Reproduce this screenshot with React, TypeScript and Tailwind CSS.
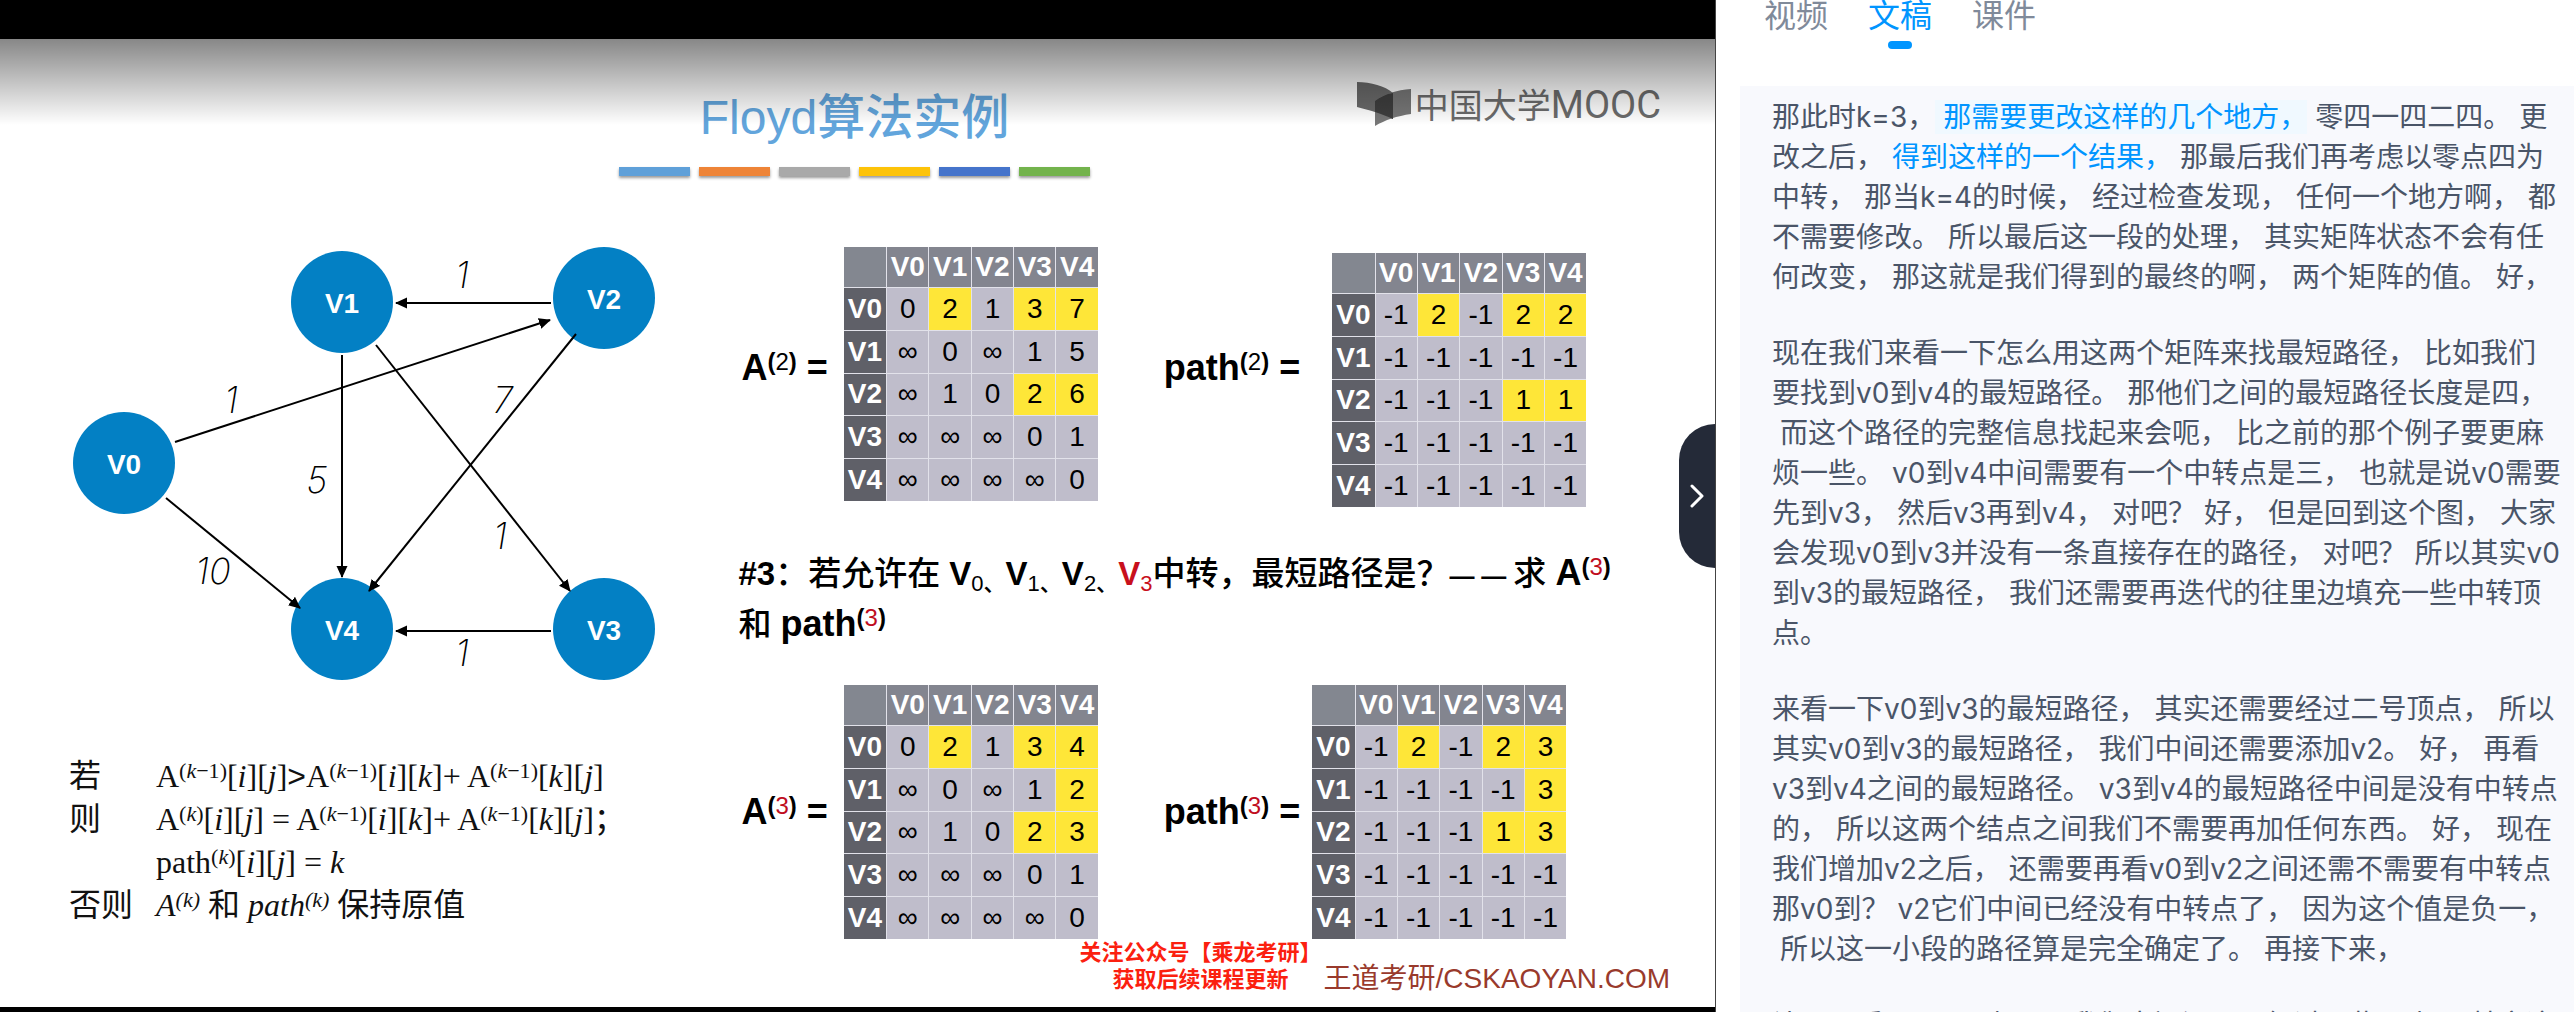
import React from "react";

const NODES = ["V0", "V1", "V2", "V3", "V4"];

type MatrixData = { rows: string[]; marked: string[] };

const A2: MatrixData = {
  rows: ["0 2 1 3 7", "∞ 0 ∞ 1 5", "∞ 1 0 2 6", "∞ ∞ ∞ 0 1", "∞ ∞ ∞ ∞ 0"],
  marked: ["01", "03", "04", "23", "24"],
};
const P2: MatrixData = {
  rows: ["-1 2 -1 2 2", "-1 -1 -1 -1 -1", "-1 -1 -1 1 1", "-1 -1 -1 -1 -1", "-1 -1 -1 -1 -1"],
  marked: ["01", "03", "04", "23", "24"],
};
const A3: MatrixData = {
  rows: ["0 2 1 3 4", "∞ 0 ∞ 1 2", "∞ 1 0 2 3", "∞ ∞ ∞ 0 1", "∞ ∞ ∞ ∞ 0"],
  marked: ["01", "03", "04", "14", "23", "24"],
};
const P3: MatrixData = {
  rows: ["-1 2 -1 2 3", "-1 -1 -1 -1 3", "-1 -1 -1 1 3", "-1 -1 -1 -1 -1", "-1 -1 -1 -1 -1"],
  marked: ["01", "03", "04", "14", "23", "24"],
};

function Matrix({ data, label }: { data: MatrixData; label: string }) {
  return (
    <table
      aria-label={label}
      className="h-[254px] w-[254px] shrink-0 table-fixed border-separate border-spacing-0 text-center font-['Liberation_Sans',sans-serif] text-[28px] leading-[40px]"
    >
      <thead>
        <tr>
          <td className="bg-[#838790] p-0" />
          {NODES.map((n) => (
            <th key={n} scope="col" className="border-l border-[#e2e2ea] bg-[#83858f] p-0 font-bold text-white">
              {n}
            </th>
          ))}
        </tr>
      </thead>
      <tbody>
        {data.rows.map((row, r) => (
          <tr key={NODES[r]}>
            <th scope="row" className="border-t border-[#e2e2ea] bg-[#5f6068] p-0 font-bold text-white">
              {NODES[r]}
            </th>
            {row.split(" ").map((v, c) => (
              <td
                key={c}
                className={
                  data.marked.includes(`${r}${c}`)
                    ? "border-t border-l border-[#e2e2ea] bg-[#fee638] p-0 text-black"
                    : "border-t border-l border-[#e2e2ea] bg-[#bfbdcb] p-0 text-black"
                }
              >
                {v}
              </td>
            ))}
          </tr>
        ))}
      </tbody>
    </table>
  );
}

function Sup({ n, red }: { n: string; red?: boolean }) {
  return (
    <sup className="top-[-10px] text-[24px]">
      (<span className={red ? "font-normal text-[#c00d1e]" : "font-normal"}>{n}</span>)
    </sup>
  );
}

function Label({ name, n, red }: { name: string; n: string; red?: boolean }) {
  return (
    <span className="whitespace-nowrap font-['Liberation_Sans',sans-serif] text-[36px] leading-[40px] font-bold">
      {name}
      <Sup n={n} red={red} /> =
    </span>
  );
}

function Graph() {
  const nodes: [string, number, number][] = [
    ["V1", 342, 302],
    ["V2", 604, 298],
    ["V0", 124, 463],
    ["V4", 342, 629],
    ["V3", 604, 629],
  ];
  const edges = [
    [551, 303, 396, 303],
    [175, 442, 550, 320],
    [342, 355, 342, 577],
    [376, 345, 570, 591],
    [576, 334, 369, 591],
    [166, 498, 300, 608],
    [551, 631, 396, 631],
  ];
  const weights: [string, number, number][] = [
    ["1", 462, 288],
    ["1", 231, 413],
    ["7", 503, 413],
    ["5", 317, 493],
    ["1", 500, 549],
    ["10", 213, 584],
    ["1", 462, 666],
  ];
  return (
    <svg viewBox="60 235 620 460" className="ml-[60px] h-[460px] w-[620px]" role="img" aria-label="有向图">
      <defs>
        <marker id="head" viewBox="0 0 12 12" refX="11" refY="6" markerWidth="12" markerHeight="12" markerUnits="userSpaceOnUse" orient="auto">
          <path d="M0 0.5 L12 6 L0 11.5 Z" fill="#000" />
        </marker>
      </defs>
      {nodes.map(([n, x, y]) => (
        <g key={n}>
          <circle cx={x} cy={y} r="51" fill="#0380c4" />
          <text x={x} y={y + 11} textAnchor="middle" className="fill-white font-['Liberation_Sans',sans-serif] text-[28px] font-bold">
            {n}
          </text>
        </g>
      ))}
      {edges.map(([x1, y1, x2, y2], i) => (
        <line key={i} x1={x1} y1={y1} x2={x2} y2={y2} stroke="#000" strokeWidth="2" markerEnd="url(#head)" />
      ))}
      {weights.map(([w, x, y], i) => (
        <text key={i} x={x} y={y} textAnchor="middle" className="fill-black font-[Inter,sans-serif] text-[36px] font-extralight italic">
          {w}
        </text>
      ))}
    </svg>
  );
}

function K({ minus }: { minus?: boolean }) {
  return (
    <sup className="top-[-9px] text-[22px]">
      (<i>k</i>
      {minus ? "−1" : ""})
    </sup>
  );
}

function Rules() {
  return (
    <div className="mt-[60px] ml-[69px] grid grid-cols-[87px_1fr] font-['Liberation_Serif','Noto_Sans_CJK_SC',serif] text-[32px] leading-[43px] whitespace-nowrap text-[#111]">
      <span>若</span>
      <span>
        A<K minus />[<i>i</i>][<i>j</i>]<span className="font-['Liberation_Sans',sans-serif]">&gt;</span>A<K minus />[<i>i</i>][<i>k</i>]+ A
        <K minus />[<i>k</i>][<i>j</i>]
      </span>
      <span>则</span>
      <span>
        A<K />[<i>i</i>][<i>j</i>] = A<K minus />[<i>i</i>][<i>k</i>]+ A<K minus />[<i>k</i>][<i>j</i>]；
      </span>
      <span />
      <span>
        path<K />[<i>i</i>][<i>j</i>] = <i>k</i>
      </span>
      <span>否则</span>
      <span>
        <i>A<K /></i> 和 <i>path<K /></i> 保持原值
      </span>
    </div>
  );
}

function Logo() {
  return (
    <div className="flex items-center gap-1 text-[#6c6c6c]">
      <svg viewBox="0 0 54 44" className="h-11 w-[54px]" aria-hidden="true">
        <path d="M0 0 C14 0 28 4 36 11 V37 C26 32 12 28 0 25 Z" fill="#6a6a6a" />
        <path d="M18 19 C26 12 40 8 54 7 V32 C40 34 28 38 18 44 Z" fill="#777" />
        <path d="M18 19 C23 15 29 12 36 11 V37 C30 34 24 32 18 30 Z" fill="#3e3e3e" />
      </svg>
      <span className="font-['Noto_Sans_CJK_SC',sans-serif] text-[34px] leading-[44px] whitespace-nowrap">
        中国大学<span className="font-[Roboto,sans-serif] text-[38px] leading-[40px]">MOOC</span>
      </span>
    </div>
  );
}

function Question() {
  return (
    <p className="mt-[42px] pl-px font-['Liberation_Sans','Noto_Sans_CJK_SC',sans-serif] text-[33px] leading-[48px] font-medium whitespace-nowrap">
      <b>#3</b>：若允许在 <b>V</b>
      <sub className="text-[22px]">0、</sub>
      <b>V</b>
      <sub className="text-[22px]">1、</sub>
      <b>V</b>
      <sub className="text-[22px]">2、</sub>
      <span className="text-[#c8101c]">
        <b>V</b>
        <sub className="text-[22px]">3</sub>
      </span>
      中转，最短路径是？<b className="text-[25px]">— — </b>求{" "}
      <b className="text-[36px]">
        A<Sup n="3" red />
      </b>
      <br />和{" "}
      <b className="text-[36px]">
        path
        <Sup n="3" red />
      </b>
    </p>
  );
}

function Slide() {
  return (
    <section className="relative flex min-w-0 flex-col border-r border-[#444] bg-white text-black">
      <div className="h-[39px] shrink-0 bg-black" />
      <div className="relative flex-1">
        <header className="grid grid-cols-[1fr_auto_1fr] items-start pt-[51px] pr-[6px]">
          <h1 className="col-start-2 text-center font-['Liberation_Sans','Noto_Sans_CJK_SC',sans-serif] text-[48px] leading-[56px] font-medium text-[#62a5dc]">
            Floyd算法实例
          </h1>
          <div className="-mt-2 flex justify-end pr-[48px]">
            <Logo />
          </div>
        </header>
        <div className="mt-[21px] flex justify-center gap-[9px] pr-[6px]">
          <i className="h-[9px] w-[71px] bg-[#5fa0d9] shadow-[0_2px_3px_#999]" />
          <i className="h-[9px] w-[71px] bg-[#ee8437] shadow-[0_2px_3px_#999]" />
          <i className="h-[9px] w-[71px] bg-[#a9a9a9] shadow-[0_2px_3px_#999]" />
          <i className="h-[9px] w-[71px] bg-[#fdc309] shadow-[0_2px_3px_#999]" />
          <i className="h-[9px] w-[71px] bg-[#4574cb] shadow-[0_2px_3px_#999]" />
          <i className="h-[9px] w-[71px] bg-[#73b34c] shadow-[0_2px_3px_#999]" />
        </div>
        <div className="grid grid-cols-[43%_1fr]">
          <div className="pt-[59px]">
            <Graph />
            <Rules />
          </div>
          <div className="pt-[71px]">
            <div className="flex items-start gap-[66px] pl-1">
              <div className="flex items-center gap-4">
                <div className="pb-3">
                  <Label name="A" n="2" />
                </div>
                <Matrix data={A2} label="A(2)" />
              </div>
              <div className="flex items-center gap-8 pt-[6px]">
                <div className="pb-6">
                  <Label name="path" n="2" />
                </div>
                <Matrix data={P2} label="path(2)" />
              </div>
            </div>
            <Question />
            <div className="mt-[36px] flex items-start gap-[66px] pl-1">
              <div className="flex items-center gap-4">
                <Label name="A" n="3" red />
                <Matrix data={A3} label="A(3)" />
              </div>
              <div className="flex items-center gap-3">
                <Label name="path" n="3" red />
                <Matrix data={P3} label="path(3)" />
              </div>
            </div>
            <footer className="flex items-end justify-end gap-[2px] pr-[45px] font-['Liberation_Sans','Noto_Sans_CJK_SC',sans-serif] whitespace-nowrap">
              <p className="text-center text-[22px] leading-[27px] font-bold text-[#fb200f]">
                关注公众号【乘龙考研】
                <br />
                获取后续课程更新
              </p>
              <p className="text-[28px] leading-[28px] text-[#993a2c]">王道考研/CSKAOYAN.COM</p>
            </footer>
          </div>
        </div>
        <div className="pointer-events-none absolute inset-x-0 top-0 h-[86px] bg-linear-to-b from-black/47 to-black/0" />
      </div>
      <div className="h-[5px] shrink-0 bg-black" />
      <button
        type="button"
        aria-label="收起"
        className="absolute top-[49%] right-0 flex h-36 w-9 -translate-y-1/2 items-center justify-center rounded-l-[36px] bg-[#242a38]"
      >
        <svg
          viewBox="0 0 14 24"
          className="h-6 w-[14px]"
          fill="none"
          stroke="#fff"
          strokeWidth="3"
          strokeLinecap="round"
          strokeLinejoin="round"
          aria-hidden="true"
        >
          <path d="M2 2 L12 12 L2 22" />
        </svg>
      </button>
    </section>
  );
}

type Segment = { text: string; tone?: "current" | "spoken" };

const PARAGRAPHS: Segment[][] = [
  [
    { text: "那此时k=3，" },
    { text: "那需要更改这样的几个地方，", tone: "current" },
    { text: "零四一四二四。" },
    { text: "更改之后，" },
    { text: "得到这样的一个结果，", tone: "spoken" },
    { text: "那最后我们再考虑以零点四为中转，" },
    { text: "那当k=4的时候，" },
    { text: "经过检查发现，" },
    { text: "任何一个地方啊，" },
    { text: "都不需要修改。" },
    { text: "所以最后这一段的处理，" },
    { text: "其实矩阵状态不会有任何改变，" },
    { text: "那这就是我们得到的最终的啊，" },
    { text: "两个矩阵的值。" },
    { text: "好，" },
  ],
  [
    { text: "现在我们来看一下怎么用这两个矩阵来找最短路径，" },
    { text: "比如我们要找到v0到v4的最短路径。" },
    { text: "那他们之间的最短路径长度是四，" },
    { text: "而这个路径的完整信息找起来会呃，" },
    { text: "比之前的那个例子要更麻烦一些。" },
    { text: "v0到v4中间需要有一个中转点是三，" },
    { text: "也就是说v0需要先到v3，" },
    { text: "然后v3再到v4，" },
    { text: "对吧？" },
    { text: "好，" },
    { text: "但是回到这个图，" },
    { text: "大家会发现v0到v3并没有一条直接存在的路径，" },
    { text: "对吧？" },
    { text: "所以其实v0到v3的最短路径，" },
    { text: "我们还需要再迭代的往里边填充一些中转顶点。" },
  ],
  [
    { text: "来看一下v0到v3的最短路径，" },
    { text: "其实还需要经过二号顶点，" },
    { text: "所以其实v0到v3的最短路径，" },
    { text: "我们中间还需要添加v2。" },
    { text: "好，" },
    { text: "再看v3到v4之间的最短路径。" },
    { text: "v3到v4的最短路径中间是没有中转点的，" },
    { text: "所以这两个结点之间我们不需要再加任何东西。" },
    { text: "好，" },
    { text: "现在我们增加v2之后，" },
    { text: "还需要再看v0到v2之间还需不需要有中转点那v0到？" },
    { text: "v2它们中间已经没有中转点了，" },
    { text: "因为这个值是负一，" },
    { text: "所以这一小段的路径算是完全确定了。" },
    { text: "再接下来，" },
  ],
  [{ text: "让需要看一下v2到v3，" }, { text: "我们中间还需要经过哪些顶点，" }, { text: "其实这个" }],
];

function Transcript() {
  return (
    <div className="mt-9 ml-6 flex flex-1 flex-col gap-9 overflow-hidden bg-[#f8f9fd] pt-[11px] pr-[13px] pl-8 text-[28px] leading-[40px] text-[#4a5568]">
      {PARAGRAPHS.map((p, i) => (
        <p key={i} className="shrink-0">
          {p.map((s, j) => (
            <React.Fragment key={j}>
              <span
                className={
                  s.tone === "current"
                    ? "bg-[#f0f9ff] pl-2 text-[#0095ff]"
                    : s.tone === "spoken"
                      ? "pl-2 text-[#0095ff]"
                      : j === 0
                        ? ""
                        : "pl-2"
                }
              >
                {s.text}
              </span>
            </React.Fragment>
          ))}
        </p>
      ))}
    </div>
  );
}

export default function App() {
  return (
    <main className="grid h-screen grid-cols-[2fr_1fr] grid-rows-[100%] overflow-hidden bg-white">
      <Slide />
      <aside className="flex min-w-0 flex-col overflow-hidden font-[Inter,'Noto_Sans_CJK_SC',sans-serif]">
        <nav className="flex h-[50px] shrink-0 gap-10 pl-12 text-[32px] leading-[32px]">
          <button type="button" className="flex flex-col items-center text-[#808a9a]">
            视频
          </button>
          <button type="button" className="flex flex-col items-center gap-[9px] text-[#0095ff]" aria-current="page">
            文稿
            <span className="h-2 w-6 rounded-full bg-[#0095ff]" />
          </button>
          <button type="button" className="flex flex-col items-center text-[#808a9a]">
            课件
          </button>
        </nav>
        <Transcript />
      </aside>
    </main>
  );
}
